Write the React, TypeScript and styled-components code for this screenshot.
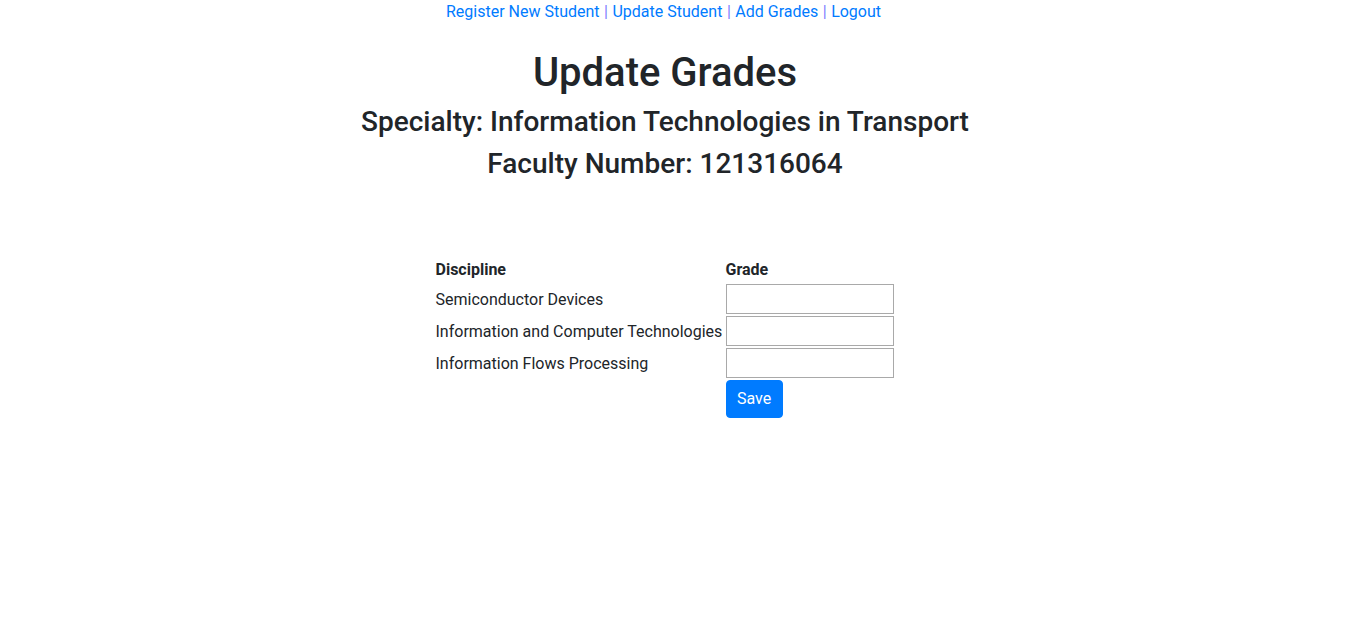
import React from "react";
import styled, { createGlobalStyle } from "styled-components";

const GlobalStyle = createGlobalStyle`
  html, body {
    margin: 0;
    padding: 0;
    background: #fff;
  }
  body {
    font-family: Roboto, "Noto Sans", sans-serif;
    font-size: 16px;
    line-height: 1.5;
    color: #212529;
  }
  * { box-sizing: border-box; }
`;

const Page = styled.div`
  padding-right: 16px;
  display: flex;
  flex-direction: column;
  align-items: center;
`;

const Nav = styled.nav`
  display: flex;
  align-items: center;
  height: 24px;
  font-size: 16px;
  line-height: 24px;
  margin-left: -3px;
`;

const NavLink = styled.a`
  color: #007bff;
  text-decoration: none;
`;

const Separator = styled.span`
  color: #7d7dff;
  margin: 0 4.5px;
`;

const Title = styled.h1`
  margin: 25px 0 8px;
  font-size: 40px;
  font-weight: 500;
  line-height: 1.2;
`;

const SubTitle = styled.h3`
  margin: 0 0 8px;
  font-size: 28px;
  font-weight: 500;
  line-height: 1.2;
`;

const GradesTable = styled.table`
  margin-top: 67px;
  margin-left: -1px;
  border-collapse: separate;
  border-spacing: 2px;
`;

const HeadCell = styled.th<{ $wide?: boolean }>`
  padding: 1px 0 0;
  text-align: left;
  font-weight: 700;
  line-height: 24px;
  min-width: ${(p) => (p.$wide ? "288px" : "0")};
`;

const Cell = styled.td`
  padding: 1px 0 0;
  line-height: 24px;
  vertical-align: middle;
`;

const InputCell = styled.td`
  padding: 0;
  vertical-align: middle;
`;

const GradeInput = styled.input`
  display: block;
  width: 168px;
  height: 30px;
  margin: 0;
  border: 1px solid #a9a9a9;
  font: inherit;
  padding: 0 4px;
  outline: none;
`;

const SaveButton = styled.button`
  display: block;
  height: 38px;
  padding: 0 10.5px;
  border: 1px solid #007bff;
  border-radius: 4px;
  background: #007bff;
  color: #fff;
  font-family: inherit;
  font-size: 16px;
  line-height: 1.5;
  cursor: pointer;
`;

const links = ["Register New Student", "Update Student", "Add Grades", "Logout"];
const disciplines = [
  "Semiconductor Devices",
  "Information and Computer Technologies",
  "Information Flows Processing",
];

export default function App() {
  return (
    <>
      <GlobalStyle />
      <Page>
        <Nav>
          {links.map((l, i) => (
            <React.Fragment key={l}>
              {i > 0 && <Separator>|</Separator>}
              <NavLink href="#">{l}</NavLink>
            </React.Fragment>
          ))}
        </Nav>
        <Title>Update Grades</Title>
        <SubTitle>Specialty: Information Technologies in Transport</SubTitle>
        <SubTitle>Faculty Number: 121316064</SubTitle>
        <GradesTable>
          <thead>
            <tr>
              <HeadCell $wide>Discipline</HeadCell>
              <HeadCell>Grade</HeadCell>
            </tr>
          </thead>
          <tbody>
            {disciplines.map((d) => (
              <tr key={d}>
                <Cell>{d}</Cell>
                <InputCell>
                  <GradeInput type="text" />
                </InputCell>
              </tr>
            ))}
            <tr>
              <Cell />
              <InputCell>
                <SaveButton type="button">Save</SaveButton>
              </InputCell>
            </tr>
          </tbody>
        </GradesTable>
      </Page>
    </>
  );
}
